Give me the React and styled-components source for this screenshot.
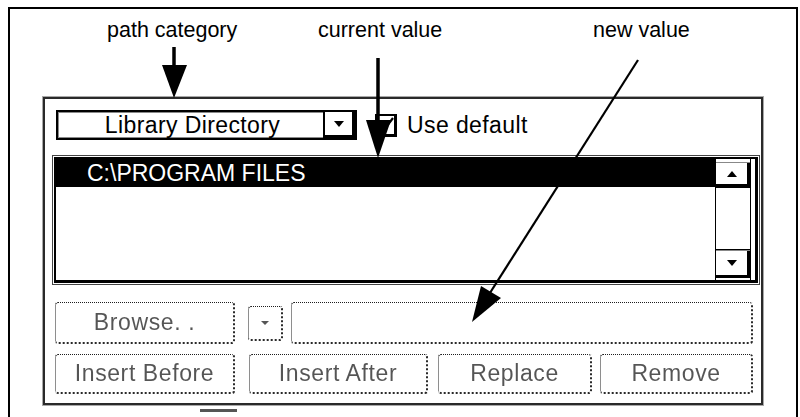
import styled, { createGlobalStyle } from "styled-components";

const GlobalStyle = createGlobalStyle`
  html, body {
    margin: 0;
    padding: 0;
    background: #fff;
    overflow: hidden;
  }
  body {
    font-family: "Liberation Sans", Arial, sans-serif;
    color: #000;
  }
`;

const App = () => {
  return (
    <>
      <GlobalStyle />
      <Page>
        <Frame>
          <LabelRow>
            <Callout $width={211}>path category</Callout>
            <Callout $width={275}>current value</Callout>
            <Callout>new value</Callout>
          </LabelRow>
          <Panel>
            <ComboRow>
              <Combo>
                <ComboText>Library Directory</ComboText>
                <ComboButton>
                  <DownTriangle />
                </ComboButton>
              </Combo>
              <CheckBox>
                <svg width="18" height="18" viewBox="0 0 18 18">
                  <path d="M3 9 L7 14 L16 2" fill="none" stroke="#000" strokeWidth="2.2" />
                </svg>
              </CheckBox>
              <CheckLabel>Use default</CheckLabel>
            </ComboRow>
            <ListOuter>
              <ListInner>
                <Rows>
                  <SelectedRow>C:\PROGRAM FILES</SelectedRow>
                </Rows>
                <Scrollbar>
                  <ScrollButton $height={25}>
                    <UpTriangle />
                  </ScrollButton>
                  <Track />
                  <ScrollButton $height={28}>
                    <DownTriangle />
                  </ScrollButton>
                </Scrollbar>
              </ListInner>
            </ListOuter>
            <ButtonsArea>
              <ButtonRow $height={42}>
                <DisabledButton $width={180}>
                  <DisabledText>Browse. .</DisabledText>
                </DisabledButton>
                <SmallDrop>
                  <SmallTriangle />
                </SmallDrop>
                <DisabledField />
              </ButtonRow>
              <ButtonRow $height={40}>
                <DisabledButton $width={180}>
                  <DisabledText>Insert Before</DisabledText>
                </DisabledButton>
                <DisabledButton $width={179} $gap={14}>
                  <DisabledText>Insert After</DisabledText>
                </DisabledButton>
                <DisabledButton $width={154} $gap={10}>
                  <DisabledText>Replace</DisabledText>
                </DisabledButton>
                <DisabledButton $width={153} $gap={8}>
                  <DisabledText>Remove</DisabledText>
                </DisabledButton>
              </ButtonRow>
            </ButtonsArea>
          </Panel>
          <CutOffMark />
        </Frame>
        <Arrows width="800" height="417" viewBox="0 0 800 417">
          <line x1="174" y1="47" x2="174" y2="70" stroke="#000" strokeWidth="3.5" />
          <polygon points="162,65 187,65 174,98" fill="#000" />
          <line x1="378" y1="58" x2="378" y2="125" stroke="#000" strokeWidth="3.5" />
          <polygon points="366,120 391,120 378,158" fill="#000" />
          <line x1="638" y1="60" x2="488" y2="296" stroke="#000" strokeWidth="2.2" />
          <polygon points="472,322 481,286 501,298" fill="#000" />
        </Arrows>
      </Page>
    </>
  );
};

const Page = styled.div`
  position: relative;
  width: 800px;
  height: 417px;
  overflow: hidden;
`;

const Frame = styled.div`
  margin: 7px 0 0 8px;
  width: 790px;
  height: 420px;
  box-sizing: border-box;
  border: 2px solid #000;
  border-bottom: none;
`;

const LabelRow = styled.div`
  display: flex;
  margin-top: 9px;
  padding-left: 97px;
  height: 24px;
  font-size: 21.5px;
  line-height: 24px;
`;

const Callout = styled.span`
  width: ${(p) => (p.$width ? `${p.$width}px` : "auto")};
  white-space: nowrap;
`;

const Panel = styled.div`
  margin: 55px 0 0 33px;
  width: 720px;
  height: 308px;
  box-sizing: border-box;
  border: 2px solid #2a2a2a;
  box-shadow: 0 0 0 1px #a8a8a8;
  padding: 11px 1px 9px 7px;
  display: flex;
  flex-direction: column;
`;

const ComboRow = styled.div`
  display: flex;
  align-items: center;
  height: 30px;
  margin-left: 4px;
`;

const Combo = styled.div`
  display: flex;
  width: 301px;
  height: 30px;
  box-sizing: border-box;
  border: 2px solid #000;
  box-shadow: inset 0 0 0 1px #8a8a8a;
  background: #fff;
`;

const ComboText = styled.div`
  flex: 1;
  text-align: center;
  font-size: 23px;
  line-height: 26px;
  letter-spacing: 0.4px;
  padding-left: 4px;
`;

const ComboButton = styled.div`
  width: 32px;
  box-sizing: border-box;
  border-left: 2px solid #000;
  background: #fff;
  box-shadow: inset -3px -3px 0 #000;
  display: flex;
  align-items: center;
  justify-content: center;
  padding: 0 3px 3px 0;
`;

const DownTriangle = styled.div`
  width: 0;
  height: 0;
  border-left: 5px solid transparent;
  border-right: 5px solid transparent;
  border-top: 6px solid #000;
`;

const UpTriangle = styled.div`
  width: 0;
  height: 0;
  border-left: 5px solid transparent;
  border-right: 5px solid transparent;
  border-bottom: 6px solid #000;
`;

const CheckBox = styled.div`
  margin-left: 18px;
  width: 22px;
  height: 23px;
  box-sizing: border-box;
  border: 2px solid #000;
  box-shadow: inset -1px -1px 0 #000;
  display: flex;
  align-items: center;
  justify-content: center;
  background: #fff;
`;

const CheckLabel = styled.span`
  margin-left: 10px;
  font-size: 23px;
  letter-spacing: 0.4px;
  line-height: 26px;
`;

const ListOuter = styled.div`
  margin-top: 15px;
  width: 708px;
  height: 130px;
  box-sizing: border-box;
  border: 1px solid #444;
  padding: 1px;
  background: #fff;
`;

const ListInner = styled.div`
  height: 100%;
  box-sizing: border-box;
  border: 2px solid #000;
  border-right-width: 3px;
  border-bottom-width: 3px;
  display: flex;
`;

const Rows = styled.div`
  flex: 1;
`;

const SelectedRow = styled.div`
  height: 28px;
  background: #000;
  color: #fff;
  font-size: 23px;
  line-height: 29px;
  padding-left: 31px;
  white-space: nowrap;
`;

const Scrollbar = styled.div`
  width: 36px;
  margin-right: 4px;
  box-sizing: border-box;
  border-left: 1px solid #000;
  border-right: 1px solid #000;
  display: flex;
  flex-direction: column;
  padding: 3px 0 2px;
  background: #fff;
`;

const ScrollButton = styled.div`
  height: ${(p) => p.$height}px;
  box-sizing: border-box;
  background: #fff;
  border-top: 1px solid #888;
  box-shadow: inset -3px -3px 0 #000;
  display: flex;
  align-items: center;
  justify-content: center;
  padding: 0 3px 3px 0;
`;

const Track = styled.div`
  flex: 1;
  border-top: 1px solid #000;
  border-bottom: 1px solid #000;
`;

const ButtonsArea = styled.div`
  margin-top: 17px;
  padding-left: 3px;
  display: flex;
  flex-direction: column;
  gap: 10px;
`;

const ButtonRow = styled.div`
  display: flex;
  align-items: center;
  height: ${(p) => p.$height}px;
`;

const dotted = `
  box-sizing: border-box;
  border-style: dotted;
  border-color: #1e1e1e #2a2a2a #2a2a2a #1e1e1e;
  border-width: 1px 2px 2px 1px;
  border-radius: 3px;
  background: #fff;
`;

const DisabledButton = styled.div`
  ${dotted}
  width: ${(p) => p.$width}px;
  margin-left: ${(p) => p.$gap || 0}px;
  height: 100%;
  display: flex;
  align-items: center;
  justify-content: center;
`;

const DisabledText = styled.span`
  font-size: 23px;
  letter-spacing: 0.6px;
  white-space: nowrap;
  color: transparent;
  background-image: radial-gradient(circle, #555 0.75px, transparent 0.95px);
  background-size: 2px 2px;
  -webkit-background-clip: text;
  background-clip: text;
`;

const SmallDrop = styled.div`
  ${dotted}
  margin-left: 13px;
  width: 35px;
  height: 35px;
  display: flex;
  align-items: center;
  justify-content: center;
`;

const SmallTriangle = styled.div`
  width: 0;
  height: 0;
  border-left: 4px solid transparent;
  border-right: 4px solid transparent;
  border-top: 4px solid #555;
`;

const DisabledField = styled.div`
  ${dotted}
  margin-left: 8px;
  width: 462px;
  height: 100%;
`;

const CutOffMark = styled.div`
  margin: 4px 0 0 190px;
  width: 37px;
  height: 3px;
  background: #555;
`;

const Arrows = styled.svg`
  position: absolute;
  top: 0;
  left: 0;
  pointer-events: none;
`;

export default App;
